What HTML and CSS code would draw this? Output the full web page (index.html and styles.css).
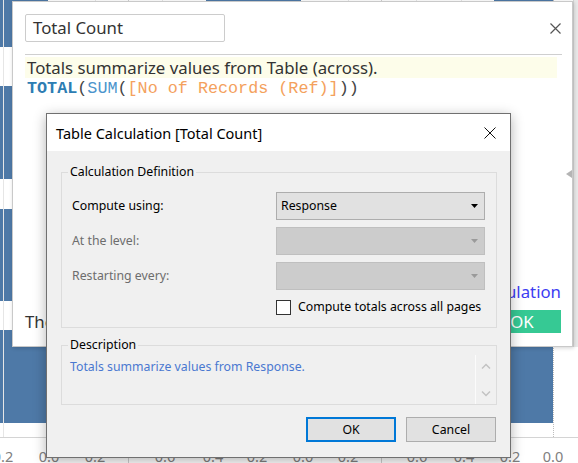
FILE: index.html
```html
<!DOCTYPE html>
<html>
<head>
<meta charset="utf-8">
<title>Table Calculation</title>
<link rel="stylesheet" href="styles.css">
</head>
<body>
<div class="screen">
  <div class="chart">
    <div class="bar" style="left:0;top:0;width:48px;height:47px"></div>
    <div class="bar" style="left:0;top:86px;width:48px;height:93px"></div>
    <div class="bar" style="left:0;top:209px;width:48px;height:92px"></div>
    <div class="bar" style="left:0;top:330px;width:48px;height:93px"></div>
    <div class="bar" style="left:206px;top:0;width:95px;height:40px"></div>
    <div class="bar" style="left:494px;top:0;width:59px;height:40px"></div>
    <div class="bar" style="left:494px;top:330px;width:59px;height:93px"></div>
    <div class="grid" style="left:3px"></div>
    <div class="grid" style="left:95px"></div>
    <div class="grid panel" style="left:128px"></div>
    <div class="grid" style="left:162px"></div>
    <div class="grid" style="left:348px"></div>
    <div class="grid panel" style="left:381px"></div>
    <div class="grid" style="left:416px"></div>
    <div class="grid" style="left:461px"></div>
    <div class="ref-line"></div>
    <div class="axis"></div>
    <span class="tick" style="left:3px">0.2</span>
    <span class="tick" style="left:49px">0.0</span>
    <span class="tick" style="left:95px">0.2</span>
    <span class="tick" style="left:165px">0.6</span>
    <span class="tick" style="left:213px">0.4</span>
    <span class="tick" style="left:257px">0.2</span>
    <span class="tick" style="left:303px">0.0</span>
    <span class="tick" style="left:348px">0.2</span>
    <span class="tick" style="left:417px">0.6</span>
    <span class="tick" style="left:464px">0.4</span>
    <span class="tick" style="left:510px">0.2</span>
    <span class="tick" style="left:553px">0.0</span>
    <div class="edge"></div>
  </div>

  <div class="calc">
    <div class="calc-head">
      <div class="name-input">Total Count</div>
      <svg class="calc-close" viewBox="0 0 11 11"><path d="M0.5 0.5 L10.5 10.5 M10.5 0.5 L0.5 10.5" stroke="#555" stroke-width="1.2" fill="none"/></svg>
    </div>
    <div class="calc-sep"></div>
    <div class="editor">
      <div class="editor-hint">Totals summarize values from Table (across).</div>
      <div class="formula"><span class="f-total">TOTAL</span><span class="f-p">(</span><span class="f-fn">SUM</span><span class="f-p">(</span><span class="f-field">[No of Records (Ref)]</span><span class="f-p">))</span></div>
    </div>
    <div class="calc-foot">
      <div class="link-row"><span class="link">Default Table Calculation</span></div>
      <div class="status-row">
        <span class="status">The calculation is valid.</span>
        <span class="ok-green">OK</span>
      </div>
    </div>
    <span class="side-tri"></span>
  </div>

  <div class="dialog">
    <div class="dlg-title">
      <span>Table Calculation [Total Count]</span>
      <svg class="dlg-close" viewBox="0 0 12 12"><path d="M0.5 0.5 L11.5 11.5 M11.5 0.5 L0.5 11.5" stroke="#111" stroke-width="1" fill="none"/></svg>
    </div>
    <div class="dlg-body">
      <fieldset class="group calc-def">
        <legend>Calculation Definition</legend>
        <div class="rows">
          <span class="lbl">Compute using:</span>
          <div class="select"><span>Response</span><svg class="arrow" viewBox="0 0 7 4"><polygon points="0,0 7,0 3.5,4" fill="#000"/></svg></div>
          <span class="lbl off">At the level:</span>
          <div class="select disabled"><span></span><svg class="arrow" viewBox="0 0 7 4"><polygon points="0,0 7,0 3.5,4" fill="#9a9a9a"/></svg></div>
          <span class="lbl off">Restarting every:</span>
          <div class="select disabled"><span></span><svg class="arrow" viewBox="0 0 7 4"><polygon points="0,0 7,0 3.5,4" fill="#9a9a9a"/></svg></div>
          <div class="check-row"><span class="check"></span><span>Compute totals across all pages</span></div>
        </div>
      </fieldset>
      <fieldset class="group desc">
        <legend>Description</legend>
        <div class="desc-inner">
          <div class="desc-text">Totals summarize values from Response.</div>
          <div class="desc-scroll">
            <svg class="chev" viewBox="0 0 10 6"><polyline points="1,5.5 5,1.5 9,5.5" stroke="#c2c2c2" stroke-width="1.4" fill="none"/></svg>
            <svg class="chev" viewBox="0 0 10 6"><polyline points="1,0.5 5,4.5 9,0.5" stroke="#c2c2c2" stroke-width="1.4" fill="none"/></svg>
          </div>
        </div>
      </fieldset>
      <div class="dlg-buttons">
        <div class="btn default">OK</div>
        <div class="btn">Cancel</div>
      </div>
    </div>
  </div>
</div>
</body>
</html>
```

FILE: styles.css
```css
* { box-sizing: border-box; }
body { margin: 0; background: #fff; }

.screen {
  position: relative;
  width: 578px;
  height: 463px;
  overflow: hidden;
  background: #fff;
  font-family: "Noto Sans", sans-serif;
}

/* background chart */
.chart { position: absolute; inset: 0; }
.bar { position: absolute; background: #4e79a7; }
.grid { position: absolute; top: 0; width: 1px; height: 437px; background: #e6e6e6; }
.grid.panel { height: 463px; background: #cfcfcf; }
.ref-line { position: absolute; left: 553px; top: 0; height: 437px; border-left: 1px dotted #bdbdbd; }
.axis { position: absolute; left: 0; right: 0; top: 437px; height: 1px; background: #d4d4d4; }
.tick {
  position: absolute;
  top: 447px;
  transform: translateX(-50%);
  font-size: 14.5px;
  line-height: 18px;
  color: #808080;
}
.edge { position: absolute; right: 0; top: 0; width: 5px; height: 347px; background: #e9e9e9; border-left: 1px solid #d6d6d6; }

/* calculation editor window */
.calc {
  position: absolute;
  left: 12px;
  top: 1px;
  width: 561px;
  height: 346px;
  background: #fff;
  border: 1px solid #c9c9c9;
  box-shadow: 1px 1px 4px rgba(0, 0, 0, 0.18);
  display: flex;
  flex-direction: column;
  padding: 12px 11px 13px 12px;
  color: #333;
  font-size: 16.8px;
}
.calc-head { display: flex; align-items: center; justify-content: space-between; }
.name-input {
  width: 200px;
  height: 28px;
  border: 1px solid #cccccc;
  border-radius: 2px;
  padding-left: 7px;
  line-height: 26px;
}
.calc-close { width: 11px; height: 11px; display: block; }
.calc-sep { margin-top: 12px; margin-right: -1px; height: 1px; background: #cfcfcf; }
.editor { margin-top: 2px; margin-right: 4px; }
.editor-hint { background: #fdfdea; line-height: 21px; padding-left: 2px; }
.formula {
  font-family: "Liberation Mono", monospace;
  font-size: 16.75px;
  line-height: 21px;
  padding-left: 2px;
  white-space: pre;
}
.f-total { color: #2d7db3; font-weight: bold; }
.f-fn { color: #4b94cc; }
.f-field { color: #f4a15d; }
.f-p { color: #444; }

.calc-foot { margin-top: auto; }
.link-row { display: flex; justify-content: flex-end; line-height: 21px; margin-bottom: 8px; }
.link { color: #3d3df2; }
.status-row { display: flex; justify-content: space-between; align-items: center; }
.ok-green {
  width: 78px;
  height: 23px;
  background: #36c994;
  color: #fff;
  text-align: center;
  line-height: 23px;
}
.side-tri {
  position: absolute;
  right: 0;
  top: 168px;
  width: 0;
  height: 0;
  border-top: 4px solid transparent;
  border-bottom: 4px solid transparent;
  border-right: 6px solid #b4b4b4;
}

/* Windows dialog */
.dialog {
  position: absolute;
  left: 46px;
  top: 113px;
  width: 465px;
  height: 345px;
  border: 1px solid #707070;
  background: #f0f0f0;
  box-shadow: 0 3px 12px rgba(0, 0, 0, 0.3);
  display: flex;
  flex-direction: column;
  font-size: 12.3px;
  color: #000;
}
.dlg-title {
  height: 37px;
  flex: none;
  background: #fff;
  display: flex;
  align-items: center;
  justify-content: space-between;
  padding: 0 14px 0 9px;
  font-size: 14.5px;
}
.dlg-close { width: 12px; height: 12px; display: block; }
.dlg-body { flex: 1; display: flex; flex-direction: column; padding: 13px 13px 15px 14px; }

.group { margin: 0; min-width: 0; border: 1px solid #dcdcdc; }
.group legend { padding: 0 2px; line-height: 16px; }

.calc-def { padding: 12px 10px 11px 6px; }
.rows {
  display: grid;
  grid-template-columns: 204px 209px;
  row-gap: 7px;
  align-items: center;
  padding-left: 4px;
}
.lbl { line-height: 16px; }
.lbl.off { color: #6d6d6d; }
.select {
  height: 28px;
  border: 1px solid #adadad;
  background: #e1e1e1;
  display: flex;
  align-items: center;
  justify-content: space-between;
  padding: 0 6px 0 4px;
  line-height: 16px;
}
.select.disabled { background: #cccccc; border-color: #bfbfbf; }
.arrow { width: 7px; height: 4px; display: block; }
.check-row {
  grid-column: 2;
  margin-top: 3px;
  height: 16px;
  display: flex;
  align-items: flex-start;
  gap: 7px;
  line-height: 13px;
}
.check { width: 15px; height: 15px; border: 1px solid #333; background: #fff; flex: none; }

.desc { margin-top: 9px; padding: 0 0 0 6px; }
.desc-inner { display: flex; height: 51px; }
.desc-text { flex: 1; padding: 6px 0 0 2px; color: #4a78d0; line-height: 16px; }
.desc-scroll {
  width: 21px;
  margin-top: 2px;
  border-left: 1px solid #fbfbfb;
  display: flex;
  flex-direction: column;
  align-items: center;
  justify-content: space-between;
  padding: 8px 0 7px;
}
.chev { width: 10px; height: 6px; display: block; }

.dlg-buttons { margin-top: auto; margin-right: 1px; display: flex; justify-content: flex-end; gap: 10px; }
.btn {
  width: 90px;
  height: 25px;
  background: #e1e1e1;
  border: 1px solid #adadad;
  display: flex;
  align-items: center;
  justify-content: center;
}
.btn.default { border: 2px solid #0078d7; }
```
